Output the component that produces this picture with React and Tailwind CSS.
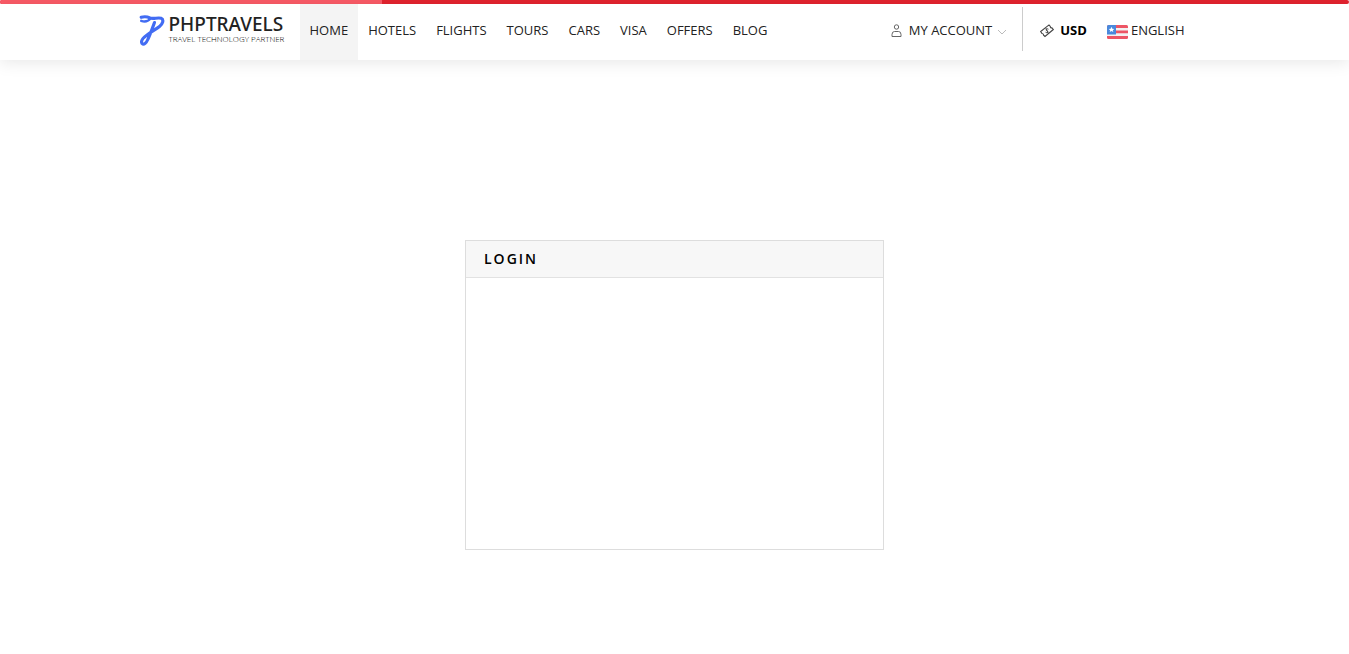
const links = ["HOME", "HOTELS", "FLIGHTS", "TOURS", "CARS", "VISA", "OFFERS", "BLOG"];

function Logo() {
  return (
    <a href="#home" aria-label="PHPTRAVELS" className="flex items-center gap-1">
      <svg className="mt-[3px] h-8 w-[26px]" viewBox="0 0 26 32" fill="none" stroke="#426cf3" strokeLinecap="round" strokeLinejoin="round">
        <path d="M2.200 2.300C5 1.500 8.500 1.800 11 3C14.500 4.300 18.500 2.200 22 3.200C25.500 4.800 23.500 9 20.500 11.500C17.500 14 13 16 8 20C4.500 22.500 1.500 26 3 28.500C5 30.500 7.500 27.500 8.800 24.500C11 20 13.500 13 15.500 7.500" strokeWidth="3.100" />
        <path d="M2.200 5.800C5 6.800 9 6.500 11.500 3.500" strokeWidth="2.400" />
      </svg>
      <span className="flex flex-col text-[#222]">
        <span className="font-['Noto_Sans','Open_Sans',sans-serif] text-[19px] leading-5 font-medium">PHPTRAVELS</span>
        <span className="text-[8px] leading-[10px] font-light whitespace-nowrap text-black">TRAVEL TECHNOLOGY PARTNER</span>
      </span>
    </a>
  );
}

function UserIcon() {
  return (
    <svg className="h-[13px] w-[11px]" viewBox="0 0 11 13" fill="none" stroke="#666">
      <circle cx="5.500" cy="3" r="2.200" />
      <path d="M1 12.500V10.500Q1 7.500 3.500 7.500H7.500Q10 7.500 10 10.500V12.500Z" />
    </svg>
  );
}

function MoneyIcon() {
  return (
    <svg className="h-[14px] w-[14px]" viewBox="0 0 14 14" fill="none" stroke="#444" strokeWidth="1.100">
      <path d="M.7 7.500L9 .9L10.300 2.400Q10.200 3.800 11.900 3.900L13.300 5.500L5 12.500L3.600 11.200Q3.800 9.800 2 9.500Z" />
      <path d="M8.500 5.200Q6.500 4 6 5.500C5.600 6.800 8.600 6.600 8 8.300Q7.300 9.500 5.500 8.200M5.800 4.200L8.300 9.300" strokeWidth=".9" />
    </svg>
  );
}

function Flag() {
  return (
    <svg className="mt-[3px] h-[14px] w-[21px]" viewBox="0 0 21 14">
      <clipPath id="flag"><rect width="21" height="14" rx="1.500" /></clipPath>
      <g clipPath="url(#flag)">
        <rect width="21" height="14" fill="#f2f2f2" />
        <path fill="#ed5565" d="M0 0H21V3H0ZM0 5.500H21V8.300H0ZM0 11H21V14H0Z" />
        <rect width="9" height="9.500" fill="#4a89dc" />
        <path fill="#fff" d="M4.500 1.800L5.300 3.700L7.300 3.900L5.800 5.200L6.300 7.100L4.500 6.100L2.700 7.100L3.200 5.200L1.700 3.900L3.700 3.700Z" />
      </g>
    </svg>
  );
}

export default function App() {
  return (
    <div className="min-h-screen bg-white font-['Open_Sans',sans-serif] text-[13px] text-[#222]">
      <div className="h-1 overflow-hidden rounded-full bg-[#e4232f]">
        <div className="h-full w-[28.3%] bg-[#fb5b67]" />
      </div>
      <header className="bg-white shadow-[0_2px_16px_rgba(0,0,0,0.1)]">
        <div className="mx-auto flex h-14 w-full max-w-[1072px] items-stretch justify-between">
          <div className="flex">
            <div className="flex w-[161px] items-center pb-[6px]">
              <Logo />
            </div>
            <nav className="flex" aria-label="Main">
              {links.map((label) => (
                <a key={label} href={`#${label.toLowerCase()}`} className={`flex items-center px-[10px] pb-[3px] ${label === "HOME" ? "bg-[#f4f4f4]" : ""}`}>
                  {label}
                </a>
              ))}
            </nav>
          </div>
          <div className="flex items-stretch pr-[26px]">
            <button type="button" className="flex items-center gap-[7px] pr-[15px] pb-[3px]">
              <UserIcon />
              <span className="flex items-center gap-[5px]">
                MY ACCOUNT
                <svg className="mt-1 h-[10px] w-[10px]" viewBox="0 0 10 10" fill="none" stroke="#bbb">
                  <path d="M1 2L5 6L9 2" />
                </svg>
              </span>
            </button>
            <span className="mt-[3px] h-11 w-px bg-[#ccc]" />
            <button type="button" className="flex items-center gap-[6px] pr-5 pb-[3px] pl-[17px] font-bold text-black">
              <MoneyIcon />
              USD
            </button>
            <button type="button" className="flex items-center gap-[3px] pb-[3px]">
              <Flag />
              ENGLISH
            </button>
          </div>
        </div>
      </header>
      <main className="px-4 pt-45">
        <section className="mx-auto w-full max-w-[419px] border border-[#ddd]">
          <h1 className="border-b border-[#e2e2e2] bg-[#f7f7f7] px-[18px] text-sm leading-9 font-semibold tracking-[2px] text-black">LOGIN</h1>
          <div className="h-[271px]" />
        </section>
      </main>
    </div>
  );
}
